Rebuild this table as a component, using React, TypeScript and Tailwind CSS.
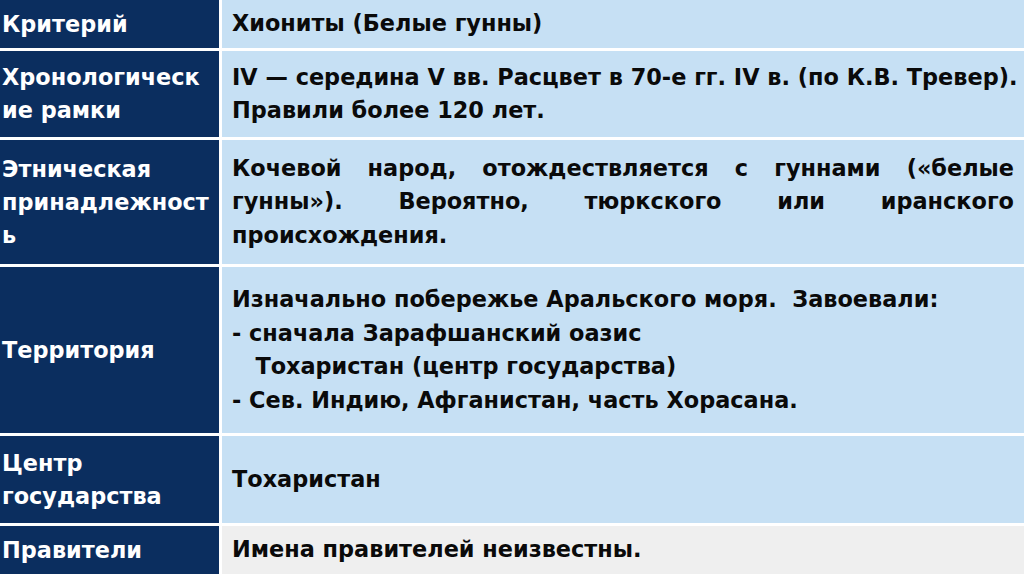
import React from "react";

const L = "bg-[#0b2e5f] text-white flex items-center pl-[2px] pr-1 leading-[33px]";
const R = "bg-[#c6e0f4] text-[#0a0a0a] flex items-center pl-[10px] pr-[10px] leading-[33.5px]";

export default function App() {
  return (
    <div
      className="w-[1024px] h-[574px] bg-white grid grid-cols-[219px_1fr] grid-rows-[48px_86px_124px_166px_87px_48px] gap-x-[3px] gap-y-[3px] overflow-hidden font-bold text-[22.4px]"
      style={{ fontFamily: '"DejaVu Sans", sans-serif' }}
    >
      <div className={L}>Критерий</div>
      <div className={R}>Хиониты (Белые гунны)</div>

      <div className={L}>
        <div>
          Хронологическ
          <br />
          ие рамки
        </div>
      </div>
      <div className="bg-[#c6e0f4] text-[#0a0a0a] flex items-center pl-[10px] leading-[33.5px] whitespace-nowrap">
        <div>
          IV — середина V вв. Расцвет в 70-е гг. IV в. (по К.В. Тревер).
          <br />
          Правили более 120 лет.
        </div>
      </div>

      <div className={L}>
        <div>
          Этническая
          <br />
          принадлежност
          <br />ь
        </div>
      </div>
      <div className={R}>
        <div className="w-full">
          <div className="text-justify [text-align-last:justify]">
            Кочевой народ, отождествляется с гуннами («белые
          </div>
          <div className="text-justify [text-align-last:justify]">
            гунны»). Вероятно, тюркского или иранского
          </div>
          <div>происхождения.</div>
        </div>
      </div>

      <div className={L}>Территория</div>
      <div className={R}>
        <div className="whitespace-pre">
          {"Изначально побережье Аральского моря.  Завоевали:\n- сначала Зарафшанский оазис\n   Тохаристан (центр государства)\n- Сев. Индию, Афганистан, часть Хорасана."}
        </div>
      </div>

      <div className={L}>
        <div>
          Центр
          <br />
          государства
        </div>
      </div>
      <div className={R}>Тохаристан</div>

      <div className={L}>Правители</div>
      <div className="bg-[#efefef] text-[#0a0a0a] flex items-center pl-[10px]">
        Имена правителей неизвестны.
      </div>
    </div>
  );
}
